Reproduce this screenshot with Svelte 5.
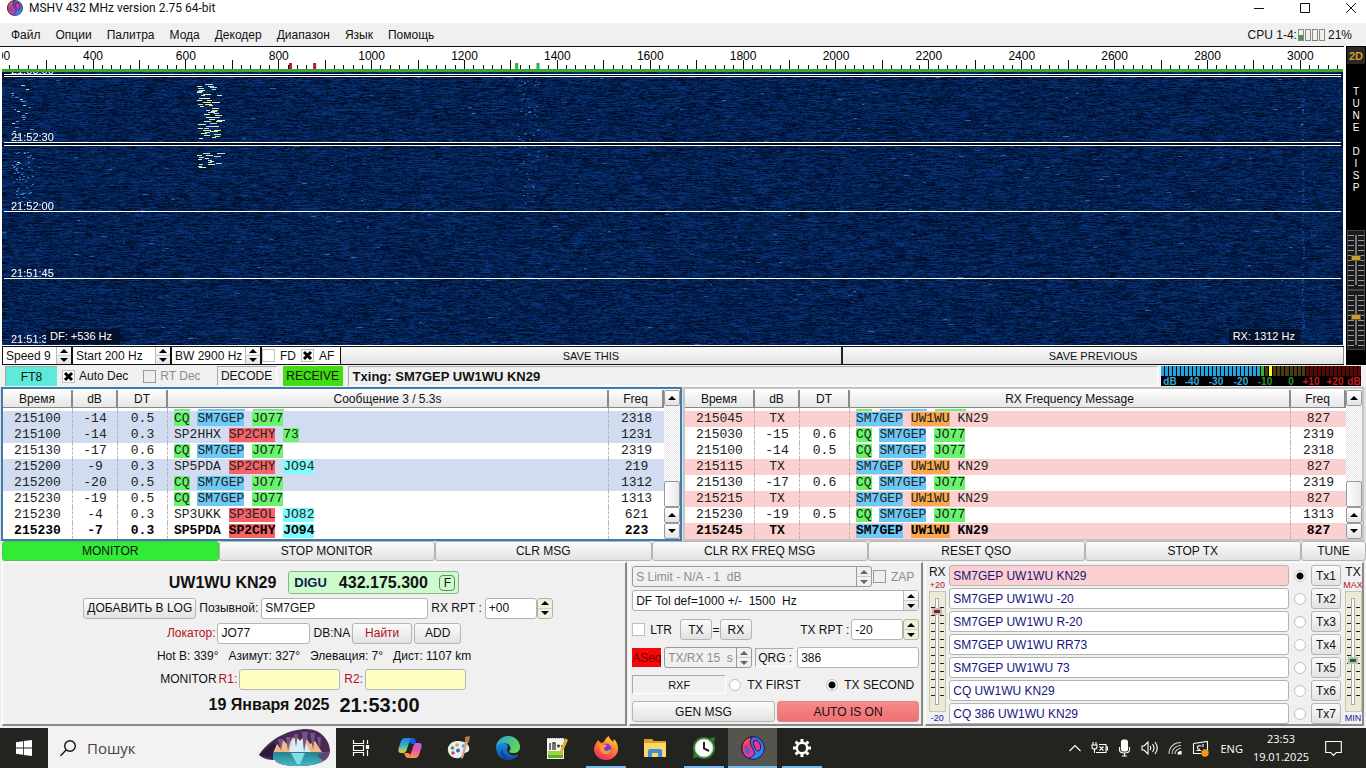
<script>
  import { onMount } from 'svelte';

  const menu = ['Файл', 'Опции', 'Палитра', 'Мода', 'Декодер', 'Диапазон', 'Язык', 'Помощь'];

  // Frequency scale: first visible frequency and visible span in Hz
  const f0 = 204;
  const span = 2890;
  const pct = (f) => ((f - f0) / span) * 100 + '%';
  const ticks = [];
  for (let f = 220; f < f0 + span; f += 20) ticks.push(f);
  const labels = [];
  for (let f = 200; f <= 3000; f += 200) labels.push(f);

  const fallHeight = 273;
  const stamps = [
    { t: '21:53:00', y: -9 },
    { t: '21:52:30', y: 58 },
    { t: '21:52:00', y: 127 },
    { t: '21:51:45', y: 194 },
    { t: '21:51:30', y: 260 }
  ];

  let canvas;
  onMount(() => {
    const W = 1341;
    const H = fallHeight;
    const ctx = canvas.getContext('2d');
    const img = ctx.createImageData(W, H);
    let seed = 77123;
    const rnd = () => {
      seed = (seed * 1664525 + 1013904223) >>> 0;
      return seed / 4294967296;
    };
    for (let y = 0; y < H; y++) {
      let v = rnd();
      for (let x = 0; x < W; x++) {
        v = v * 0.72 + rnd() * 0.28;
        let k = Math.max(0, Math.min(1, (v - 0.5) * 2.4 + 0.45));
        const i = (y * W + x) * 4;
        img.data[i] = k * 8;
        img.data[i + 1] = 14 + k * 40;
        img.data[i + 2] = 44 + k * 80;
        img.data[i + 3] = 255;
      }
    }
    ctx.putImageData(img, 0, 0);
    const streak = (x, y, w, c) => {
      ctx.fillStyle = c;
      ctx.fillRect(Math.round(x), Math.round(y), Math.round(w), 1);
    };
    for (let n = 0; n < 260; n++)
      streak(rnd() * W, rnd() * H, 2 + rnd() * 4, 'rgba(90,140,220,' + (0.25 + rnd() * 0.4) + ')');
    const bursts = [[11, 66], [80, 96]];
    for (const [a, b] of bursts) {
      for (let y = a; y < b; y += 2) {
        for (let n = 0; n < 2; n++) {
          const x = 194 + rnd() * 21;
          streak(x, y + rnd(), 4 + rnd() * 4, rnd() > 0.45 ? '#e4f29a' : '#b9dcec');
        }
        if (rnd() > 0.3) streak(9 + rnd() * 20, y, 2 + rnd() * 2, rnd() > 0.7 ? '#b5d8c8' : '#5f96d2');
      }
    }
    for (let n = 0; n < 50; n++)
      streak(10 + rnd() * 20, 76 + rnd() * 56, 2, '#3f76bc');
    for (let n = 0; n < 60; n++)
      streak(514 + rnd() * 22, 2 + rnd() * 130, 2, 'rgba(80,140,220,.6)');
    for (let n = 0; n < 130; n++) streak(1299 + rnd() * 2, rnd() * H, 2, 'rgba(30,90,190,.5)');
    ctx.fillStyle = '#020a18';
    ctx.fillRect(0, 3, W, 1);
    ctx.fillRect(0, 71, W, 2);
    ctx.fillStyle = '#fff';
    for (const y of [2, 4, 70, 73, 139, 206]) ctx.fillRect(2, y, W - 4, 1);
  });

  const cq = [['CQ', 'g'], ['SM7GEP', 'b'], ['JO77', 'g']];
  const own = [['SM7GEP', 'b'], ['UW1WU', 'o'], ['KN29', '']];
  const left = {
    title: 'Сообщение 3 / 5.3s',
    rows: [
      { c: ['215100', '-14', '0.5', cq, '2318'], k: 'lav' },
      { c: ['215100', '-14', '0.3', [['SP2HHX', ''], ['SP2CHY', 'r'], ['73', 'g']], '1231'], k: 'lav' },
      { c: ['215130', '-17', '0.6', cq, '2319'], k: '' },
      { c: ['215200', '-9', '0.3', [['SP5PDA', ''], ['SP2CHY', 'r'], ['JO94', 'c']], '219'], k: 'lav' },
      { c: ['215200', '-20', '0.5', cq, '1312'], k: 'lav' },
      { c: ['215230', '-19', '0.5', cq, '1313'], k: '' },
      { c: ['215230', '-4', '0.3', [['SP3UKK', ''], ['SP3EOL', 'r'], ['JO82', 'c']], '621'], k: '' },
      { c: ['215230', '-7', '0.3', [['SP5PDA', ''], ['SP2CHY', 'r'], ['JO94', 'c']], '223'], k: 'last' }
    ]
  };
  const right = {
    title: 'RX Frequency Message',
    rows: [
      { c: ['215045', 'TX', '', own, '827'], k: 'pink' },
      { c: ['215030', '-15', '0.6', cq, '2319'], k: '' },
      { c: ['215100', '-14', '0.5', cq, '2318'], k: '' },
      { c: ['215115', 'TX', '', own, '827'], k: 'pink' },
      { c: ['215130', '-17', '0.6', cq, '2319'], k: '' },
      { c: ['215215', 'TX', '', own, '827'], k: 'pink' },
      { c: ['215230', '-19', '0.5', cq, '1313'], k: '' },
      { c: ['215245', 'TX', '', own, '827'], k: 'pink last' }
    ]
  };

  const actions = ['MONITOR', 'STOP MONITOR', 'CLR MSG', 'CLR RX FREQ MSG', 'RESET QSO', 'STOP TX', 'TUNE'];
  const tx = [
    'SM7GEP UW1WU KN29', 'SM7GEP UW1WU -20', 'SM7GEP UW1WU R-20', 'SM7GEP UW1WU RR73',
    'SM7GEP UW1WU 73', 'CQ UW1WU KN29', 'CQ 386 UW1WU KN29'
  ];

  const bars = Array.from({ length: 50 }, (_, i) =>
    i < 25 ? '#23a4dc' : i === 25 ? '#2fb52f' : i === 27 ? '#ffff30' : i < 36 ? '#4a3c10' : '#5c0808'
  );
  const db = [
    ['dB', 9, '#33aadd'], ['-40', 31, '#33aadd'], ['-30', 55, '#33aadd'], ['-20', 80, '#33aadd'],
    ['-10', 104, '#1f9a2a'], ['0', 130, '#1f9a2a'], ['+10', 150, '#d01818'], ['+20', 174, '#d01818'], ['dB', 193, '#d01818']
  ];
</script>

{#snippet arrows(label)}
  <span class="arrows">
    <button type="button" aria-label="{label} up"><svg viewBox="0 0 8 4"><path d="M0 4 4 0 8 4z" /></svg></button>
    <button type="button" aria-label="{label} down"><svg viewBox="0 0 8 4"><path d="M0 0h8L4 4z" /></svg></button>
  </span>
{/snippet}

{#snippet spin(value, label, cls, off = false)}
  <span class="spin {cls}" class:off>
    <input type="text" {value} aria-label={label} disabled={off} />
    {@render arrows(label)}
  </span>
{/snippet}

{#snippet logo(size, id)}
  <svg width={size} height={size} viewBox="0 0 24 24">
    <defs>
      <linearGradient id="{id}a" x1="0" y1="0" x2="0.4" y2="1"><stop offset="0" stop-color="#ff8040" /><stop offset=".45" stop-color="#f83c50" /><stop offset="1" stop-color="#e03aa8" /></linearGradient>
      <linearGradient id="{id}b" x1="0" y1="0" x2=".6" y2="1"><stop offset="0" stop-color="#6a44d8" /><stop offset="1" stop-color="#2a8cf0" /></linearGradient>
    </defs>
    <circle cx="12" cy="12" r="11.400" fill="url(#{id}b)" stroke="#20184a" stroke-width="1" />
    <path d="M11 1C4 2 1 7 1 12s3 9 6.500 10.200C12 21 15 18 12.500 14 10 10 7.500 5 11 1z" fill="url(#{id}a)" stroke="#20184a" />
    <path d="M13 5c3-1.500 6 1 6.500 5s-2 6-3.500 4.500-5-7-3-9.500z" fill="#e03c8c" stroke="#20184a" />
    <path d="M4.500 9c2-.5 5.500 4 5 7s-3.500 2.500-5 0-2-6.500 0-7z" fill="#4a58e0" opacity=".75" />
  </svg>
{/snippet}

{#snippet log(data, cls)}
  <section class="log {cls}">
    <table>
      <colgroup><col class="c1" /><col class="c2" /><col class="c3" /><col /><col class="c5" /></colgroup>
      <thead>
        <tr><th>Время</th><th>dB</th><th>DT</th><th>{data.title}</th><th>Freq</th></tr>
      </thead>
      <tbody>
        <tr class="peek"><td></td><td></td><td></td><td class="msg"><i class="g w2"></i><i class="b w6"></i><i class="g w4"></i></td><td></td></tr>
        {#each data.rows as row}
          <tr class={row.k}>
            {#each row.c as cell, i}
              {#if i === 3}
                <td class="msg">{#each cell as [word, tone], n}{n ? ' ' : ''}<span class={tone}>{word}</span>{/each}</td>
              {:else}
                <td>{cell}</td>
              {/if}
            {/each}
          </tr>
        {/each}
      </tbody>
    </table>
    <div class="scroll">
      <button type="button" aria-label="Scroll to top"><svg viewBox="0 0 8 4"><path d="M0 4 4 0 8 4z" /></svg></button>
      <div class="track"><div class="thumb"></div></div>
      <button type="button" aria-label="Scroll up"><svg viewBox="0 0 8 4"><path d="M0 4 4 0 8 4z" /></svg></button>
      <button type="button" aria-label="Scroll down"><svg viewBox="0 0 8 4"><path d="M0 0h8L4 4z" /></svg></button>
    </div>
  </section>
{/snippet}

<div class="screen">
  <header class="title">
    {@render logo(16, 't')}
    <span>MSHV 432 MHz version 2.75 64-bit</span>
    <div class="wins">
      <button type="button" aria-label="Minimize"><svg viewBox="0 0 12 12"><path d="M1 6.500h10" /></svg></button>
      <button type="button" aria-label="Maximize"><svg viewBox="0 0 12 12"><path d="M1.500 1.500h9v9h-9z" /></svg></button>
      <button type="button" aria-label="Close"><svg viewBox="0 0 12 12"><path d="M1 1l10 10M11 1 1 11" /></svg></button>
    </div>
  </header>

  <nav class="menu">
    {#each menu as m}<button type="button">{m}</button>{/each}
    <div class="cpu">CPU 1-4:<i><b></b></i><i></i><i class="low"></i><i></i><span>21%</span></div>
  </nav>

  <div class="top">
    <div class="topmain">
      <svg class="ruler" role="img" aria-label="Frequency scale">
        {#each ticks as f}
          <line x1={pct(f)} x2={pct(f)} y1={f % 100 === 0 ? 13 : 18} y2="22" stroke="#111" shape-rendering="crispEdges" />
        {/each}
        {#each labels as f}
          <text x={pct(f)} y="13" text-anchor="middle">{f}</text>
        {/each}
        {#each [822, 874] as f}<rect x={pct(f)} y="16" width="3" height="6" fill="#b81c2c" />{/each}
        {#each [1309, 1355] as f}<rect x={pct(f)} y="16" width="3" height="6" fill="#22b83c" />{/each}
      </svg>
      <div class="fall">
        <canvas bind:this={canvas} width="1341" height={fallHeight}></canvas>
        {#each stamps as s}
          <span class="stamp" style:top="{(s.y / fallHeight) * 100}%">{s.t}</span>
        {/each}
        <span class="df">DF: +536 Hz</span>
        <span class="rxhz">RX: 1312 Hz</span>
      </div>
      <div class="ctl">
        {@render spin('Speed 9', 'Speed', 's1')}
        {@render spin('Start 200 Hz', 'Start', 's2')}
        {@render spin('BW 2900 Hz', 'Bandwidth', 's3')}
        <span class="flags">
          <label><input type="checkbox" />FD</label>
          <label><input type="checkbox" checked />AF</label>
        </span>
        <button type="button" class="save">SAVE THIS</button>
        <button type="button" class="save">SAVE PREVIOUS</button>
      </div>
    </div>
    <aside class="side">
      <button type="button">2D</button>
      <div class="word"><span>T</span><span>U</span><span>N</span><span>E</span><span></span><span>D</span><span>I</span><span>S</span><span>P</span></div>
      <input class="dark" type="range" value="54" aria-label="Contrast" />
      <input class="dark" type="range" value="56" aria-label="Brightness" />
    </aside>
  </div>

  <div class="status">
    <button type="button" class="ft8">FT8</button>
    <label class="auto"><input type="checkbox" checked />Auto Dec</label>
    <label class="rt"><input type="checkbox" disabled />RT Dec</label>
    <button type="button" class="sunk">DECODE</button>
    <span class="recv">RECEIVE</span>
    <span class="txing">Txing: SM7GEP UW1WU KN29</span>
    <div class="meter">
      <div class="bars">{#each bars as b}<i style:background={b}></i>{/each}</div>
      <svg viewBox="0 0 200 10">
        {#each db as [t, x, c]}<text {x} y="9" fill={c} text-anchor="middle">{t}</text>{/each}
      </svg>
    </div>
  </div>

  <div class="logs">
    {@render log(left, 'focus')}
    {@render log(right, '')}
  </div>

  <div class="actions">
    {#each actions as a, i}<button type="button" class:on={i === 0}>{a}</button>{/each}
  </div>

  <main class="panels">
    <section class="panel station">
      <div class="line big">
        <strong>UW1WU KN29</strong>
        <div class="freq"><span>DIGU</span><strong>432.175.300</strong><button type="button">F</button></div>
      </div>
      <div class="line callrow">
        <button type="button" class="btn add-log">ДОБАВИТЬ В LOG</button>
        <label for="call">Позывной:</label>
        <input id="call" class="field call" value="SM7GEP" />
        <label for="rpt">RX RPT :</label>
        <span class="joined"><input id="rpt" class="field rpt" value="+00" />{@render arrows('RX report')}</span>
      </div>
      <div class="line">
        <label for="loc" class="red">Локатор:</label>
        <input id="loc" class="field loc" value="JO77" />
        <span>DB:NA</span>
        <button type="button" class="btn find red">Найти</button>
        <button type="button" class="btn add">ADD</button>
      </div>
      <div class="line info"><span>Hot B: 339°</span><span>Азимут: 327°</span><span>Элевация: 7°</span><span>Дист: 1107 km</span></div>
      <div class="line">
        <span>MONITOR</span>
        <label for="r1" class="red">R1:</label>
        <input id="r1" class="field mon" />
        <label for="r2" class="red">R2:</label>
        <input id="r2" class="field mon" />
      </div>
      <div class="line clockline"><strong>19 Января 2025</strong><strong class="now">21:53:00</strong></div>
    </section>

    <section class="panel control">
      <div class="line first">
        {@render spin('S Limit - N/A - 1  dB', 'S Limit', 'grow round', true)}
        <label class="off"><input type="checkbox" disabled />ZAP</label>
      </div>
      <div class="line">{@render spin('DF Tol def=1000 +/-  1500  Hz', 'DF tolerance', 'grow round')}</div>
      <div class="line ltr">
        <label><input type="checkbox" />LTR</label>
        <span class="swap"><button type="button" class="btn">TX</button><b>=</b><button type="button" class="btn">RX</button></span>
        <label class="push" for="txrpt">TX RPT :</label>
        <span class="joined"><input id="txrpt" class="field rpt" value="-20" />{@render arrows('TX report')}</span>
      </div>
      <div class="line seq">
        <button type="button" class="aseq">ASeq</button>
        {@render spin('TX/RX 15  s', 'Period', 'period round', true)}
        <label class="sunk qrg" for="qrg">QRG :</label>
        <input id="qrg" class="field fill" value="386" />
      </div>
      <div class="line order">
        <span class="sunk rxf">RXF</span>
        <label><input type="radio" name="order" />TX FIRST</label>
        <label class="second"><input type="radio" name="order" checked />TX SECOND</label>
      </div>
      <div class="line two">
        <button type="button" class="btn">GEN MSG</button>
        <button type="button" class="btn autoon">AUTO IS ON</button>
      </div>
    </section>

    <section class="panel messages">
      <div class="level"><span>RX</span><small class="red">+20</small><input class="light rxs" type="range" value="86" aria-label="RX level" /><small class="blue">-20</small></div>
      <div class="list">
        {#each tx as t, i}
          <div class="txrow">
            <input class="field" class:hot={i === 0} value={t} aria-label="Message {i + 1}" />
            <input type="radio" name="tx" checked={i === 0} aria-label="Select message {i + 1}" />
            <button type="button" class="btn">Tx{i + 1}</button>
          </div>
        {/each}
      </div>
      <div class="level"><span>TX</span><small class="red">MAX</small><input class="light txs" type="range" value="42" aria-label="TX level" /><small class="blue">MIN</small></div>
    </section>
  </main>

  <footer class="taskbar">
    <button type="button" class="task" aria-label="Start"><svg width="16" height="16" viewBox="0 0 16 16"><path fill="#fff" d="M0 2.200 7 1.200v6.400H0zM7.800 1.100 16 0v7.600H7.800zM0 8.400h7v6.400L0 13.800zM7.800 8.400H16V16l-8.200-1.100z" /></svg></button>
    <label class="search">
      <svg width="18" height="18" viewBox="0 0 18 18" fill="none" stroke="#111" stroke-width="1.400"><circle cx="11" cy="7" r="5.300" /><path d="M7.200 11 1.500 16.700" /></svg>
      <input placeholder="Пошук" aria-label="Пошук" />
      <svg width="72" height="38" viewBox="0 0 72 38">
        <defs>
          <clipPath id="cave"><path d="M0 26C10 10 30 0 48 0c14 0 23 12 23 22-1 11-14 15-32 15-12 0-21-2-23-6-6 0-12-1-16-5z" /></clipPath>
          <linearGradient id="sea" x1="0" y1="0" x2="0" y2="1"><stop offset="0" stop-color="#27808c" /><stop offset="1" stop-color="#45bccb" /></linearGradient>
        </defs>
        <g clip-path="url(#cave)">
          <path fill="#4a2a55" d="M0 0h72v38H0z" />
          <path fill="#2c1a38" d="M0 26 14 14l4 3-4 12z" />
          <path fill="#f0b98c" d="M14 24 18 15l3 4 3-8 5 5 5-8 5 5 7-6 5 8 5-3 5 8 4 6H14z" />
          <path fill="#d6eef4" d="M30 24l3-12 4-5 4 5 5-3 2 8 4 7z" />
          <path fill="#73548d" d="M19 10h5l-2 12zM27 8h5l-3 14zM35 5h4l-2 13zM43 3h6l-4 20zM51 4h5l-2 17zM58 8h4l-1 12z" />
          <path fill="url(#sea)" d="M14 23h56v15H14z" />
          <path fill="#83dbe5" d="M32 24h14l-5 11h-3z" />
          <path fill="#6b4070" d="M58 26l12-4v8l-6 2z" />
        </g>
      </svg>
    </label>
    <button type="button" class="task" aria-label="Task view"><svg width="18" height="16" viewBox="0 0 18 16" fill="none" stroke="#fff" stroke-width="1.200"><path d="M1.500 0v3.500h10V0M1.500 16v-3.500h10V16M1.500 5.500h10v5h-10zM15.500 0v4M15.500 10v6" /><path d="M14.500 5.500h2v3h-2z" fill="#fff" /></svg></button>
    <button type="button" class="task" aria-label="Copilot">
      <svg width="24" height="22" viewBox="0 0 24 22">
        <defs>
          <linearGradient id="cp1" x1="0" y1="0" x2="0" y2="1"><stop offset="0" stop-color="#1f7fe8" /><stop offset=".45" stop-color="#2bb0c8" /><stop offset="1" stop-color="#e8d038" /></linearGradient>
          <linearGradient id="cp2" x1="0" y1="0" x2="0" y2="1"><stop offset="0" stop-color="#b15cf0" /><stop offset=".5" stop-color="#f0589c" /><stop offset="1" stop-color="#f89850" /></linearGradient>
        </defs>
        <path fill="#1a5cd0" d="M8 1h7q2 0 3 4l1 2h-5q-2 0-3-3z" />
        <path fill="url(#cp1)" d="M7 1h6q-1 1-2 5l-2 6q-1 4-4 4H3q-4 0-2-6l2-6q1-3 4-3z" />
        <path fill="url(#cp2)" d="M17 21h-6q1-1 2-5l2-6q1-4 4-4h2q4 0 2 6l-2 6q-1 3-4 3z" />
        <path fill="#f88a3c" d="M6 16h4q2 0 3 3l-2 2H9q-2-1-3-5z" />
      </svg>
    </button>
    <button type="button" class="task" aria-label="Paint">
      <svg width="24" height="24" viewBox="0 0 24 24">
        <path fill="#e9eef2" d="M11 5C4 5 0 10 1 15s6 8 11 7c4-1 3-4 6-5s5-2 4-6c-1-4-6-6-11-6z" />
        <circle cx="10" cy="9" r="1.800" fill="#e8a02c" /><circle cx="5.500" cy="12" r="1.800" fill="#4a9a50" /><circle cx="6" cy="17" r="1.800" fill="#d04a3a" /><circle cx="11" cy="14.500" r="2" fill="#2a6dc0" /><circle cx="16.500" cy="10" r="1.800" fill="#4aa6e0" />
        <path fill="#d8a878" d="M18 6h3l-5 16-2 1 1-5z" /><path fill="#b07a50" d="M18 1l5-1-1 6h-4z" />
      </svg>
    </button>
    <button type="button" class="task" aria-label="Edge">
      <svg width="26" height="26" viewBox="0 0 26 26">
        <defs>
          <linearGradient id="eg1" x1="0" y1="0" x2="1" y2=".4"><stop offset="0" stop-color="#2a9be0" /><stop offset="1" stop-color="#5cd85c" /></linearGradient>
          <linearGradient id="eg2" x1="0" y1="0" x2="0" y2="1"><stop offset="0" stop-color="#1a8ce0" /><stop offset="1" stop-color="#0d4fa8" /></linearGradient>
        </defs>
        <path fill="url(#eg2)" d="M1 12c0 8 5 13 12 13 5 0 9-3 11-6-5 3-11 1-12-4 0-2 1-3 1-4C11 7 3 6 1 12z" />
        <path fill="url(#eg1)" d="M1 12C2 5 7 1 13 1c8 0 12 6 12 11 0 4-3 6-6 6-4 0-6-1-4-3 2-4-2-7-7-7-3 0-6 2-7 4z" />
        <path fill="#0a3f8c" d="M8 14c0 6 5 10 11 9-4 3-11 2-13-3-1-3 0-5 2-6z" opacity=".7" />
      </svg>
    </button>
    <button type="button" class="task" aria-label="Notepad++">
      <svg width="24" height="24" viewBox="0 0 24 24">
        <path fill="#f4f6ee" d="M2 2h17v21H2z" /><path fill="#9bd645" d="M3 15h15v7H3z" /><path fill="#5fae2a" d="M3 19h15v3H3z" />
        <path stroke="#333" stroke-width="1.300" fill="none" d="M5 14V7M8 14V7h2v7M12 10h3M13.500 8.500v3M16 10h3" /><path stroke="#aaa" stroke-dasharray="1 1" d="M2 2.500h17" />
        <path fill="#e0b23a" d="M20 2l3 2-6 13-3 2 1-4z" />
      </svg>
    </button>
    <button type="button" class="task run" aria-label="Firefox">
      <svg width="24" height="24" viewBox="0 0 24 24">
        <defs><linearGradient id="ff" x1=".8" y1="0" x2=".3" y2="1"><stop offset="0" stop-color="#ffd93a" /><stop offset=".5" stop-color="#ff7a2a" /><stop offset="1" stop-color="#f0286a" /></linearGradient></defs>
        <path fill="url(#ff)" d="M4 4l3 3 3-1c1-3 3-5 5-6 0 3 3 4 4 6l1-3c3 3 4 6 4 10 0 6-5 11-12 11S0 19 0 13c0-3 2-6 4-9z" />
        <circle cx="12" cy="13" r="5.500" fill="#7a3ad8" /><path fill="#ff9a2c" d="M5 9c3-2 5 0 8 0-1 2-3 2-3 4 1 3 5 2 7 0 0 4-3 6-6 5-4 0-6-5-6-9z" />
      </svg>
    </button>
    <button type="button" class="task" aria-label="Explorer">
      <svg width="22" height="20" viewBox="0 0 22 20"><path fill="#d9a02c" d="M0 1h8l2 2h12v5H0z" /><path fill="#fbd66c" d="M0 5h22v14H0z" /><path fill="#3d8fd0" d="M4 19v-6q0-2 2-2h10q2 0 2 2v6h-4v-4H8v4z" /></svg>
    </button>
    <button type="button" class="task run" aria-label="Time sync">
      <svg width="24" height="24" viewBox="0 0 24 24"><circle cx="12" cy="12" r="11" fill="#2f7a2c" /><circle cx="12" cy="12" r="9" fill="#fff" stroke="#a8dba0" /><path d="M12 6v6.500l5 2.500" fill="none" stroke="#222" stroke-width="2" /><path fill="#2f7a2c" d="M18 2l5-1-1 6zM1 22l1-6 5 5z" /></svg>
    </button>
    <button type="button" class="task run active" aria-label="MSHV">{@render logo(24, 'k')}</button>
    <button type="button" class="task run" aria-label="Settings">
      <svg width="20" height="20" viewBox="0 0 20 20" fill="none" stroke="#fff"><circle cx="10" cy="10" r="5.200" stroke-width="2.400" /><path stroke-width="3" d="M10 1v3M10 16v3M1 10h3M16 10h3M3.600 3.600l2.200 2.200M14.200 14.200l2.200 2.200M16.400 3.600l-2.200 2.200M5.800 14.200l-2.200 2.200" /></svg>
    </button>

    <div class="tray">
      <svg width="12" height="8" viewBox="0 0 12 8"><path d="M.5 7 6 1.500 11.500 7" /></svg>
      <svg width="17" height="14" viewBox="0 0 17 14"><path d="M2 1v3M5 1v3M1 4h5v2q0 2-2.500 2T1 6zM3.500 8v4M8 3.500h7v8H5M15.500 6h1v3h-1M8.500 5.500l4 4M12.500 5.500l-4 4" /></svg>
      <svg width="13" height="18" viewBox="0 0 13 18"><rect x="3.500" y="1" width="6" height="11" rx="2" fill="#fff" /><path d="M1.500 8v3q0 3 5 3t5-3V8M6.500 14v3M4 17h5" /></svg>
      <svg width="17" height="14" viewBox="0 0 17 14"><path d="M1 5h2l4-4v12L3 9H1zM9 5q1.500 2 0 4M11.500 3q3 4 0 8M14 1q4.500 6 0 12" /></svg>
      <svg width="14" height="14" viewBox="0 0 14 14"><path d="M1 13C1 6 6 1.500 13 1.500M4 13c0-5 4-8.500 9-8.500M7 13c0-3 2.500-5.500 6-5.500" opacity=".8" /><path d="M10 13q0-2.500 3-2.500V13z" fill="#fff" /></svg>
      <svg width="18" height="17" viewBox="0 0 18 17"><path d="M1.500 3.500 15.500 1.500v9M1.500 3.500v10H9M4.500 10.500H9M9.500 6q-4-1-4 1.500T8 9M11 4v3" /><circle cx="13" cy="13" r="3.700" fill="#f09a1c" stroke="none" /></svg>
      <span>ENG</span>
      <time><span>23:53</span><span>19.01.2025</span></time>
      <svg width="17" height="17" viewBox="0 0 17 17"><path d="M.7 1.500h15.600v11h-5L8.500 15.500 5.700 12.500h-5z" /></svg>
    </div>
  </footer>
</div>

<style>
  :global(body) { margin: 0; background: #f0f0f0; }
  .screen {
    display: flex; flex-direction: column; min-height: 100vh; overflow: hidden;
    font-family: "Liberation Sans", Arial, sans-serif; font-size: 12px; color: #111; background: #f0f0f0;
  }
  .screen *, .screen *::before { box-sizing: border-box; }
  button, input { font: inherit; color: inherit; margin: 0; padding: 0; }
  button { border: 0; background: none; white-space: nowrap; }
  input { min-width: 0; }
  svg { display: block; flex: none; }
  .red { color: #b01020; }
  .blue { color: #1018a0; }

  .title { display: flex; align-items: center; gap: 6px; height: 23px; padding: 0 8px 8px 7px; background: #fff; font: 12px Roboto, "Noto Sans", sans-serif; }
  .wins { margin-left: auto; display: flex; gap: 34px; padding-right: 1px; }
  .wins svg { width: 12px; height: 12px; fill: none; stroke: #111; }

  .menu { display: flex; align-items: center; gap: 15px; height: 23px; padding: 0 14px 0 11px; }
  .cpu { margin-left: auto; display: flex; align-items: center; gap: 1px; }
  .cpu i { width: 6px; height: 12px; border: 1px solid #8a8a80; display: flex; align-items: flex-end; }
  .cpu b { flex: 1; height: 5px; background: #3f9a4c; }
  .cpu .low { border-bottom-color: #3f9a4c; }
  .cpu span { padding-left: 2px; }

  .top { display: flex; flex: 1 0 auto; }
  .topmain { flex: 1; min-width: 0; display: flex; flex-direction: column; padding-left: 2px; border-top: 1px solid #111; background: #fff; }
  .ruler { width: 100%; height: 22px; background: #fff; overflow: hidden; font-size: 12px; }
  .fall { position: relative; flex: 1 0 277px; border-top: 3px solid #35a83c; border-bottom: 1px solid #fff; margin-right: 1px; background: #03204e; overflow: hidden; }
  .fall canvas { position: absolute; inset: 0; width: 100%; height: 100%; display: block; }
  .stamp { position: absolute; left: 9px; color: #fff; line-height: 14px; font-size: 11px; }
  .df, .rxhz { position: absolute; bottom: 1px; height: 15px; line-height: 15px; padding: 0 4px; font-size: 11px; color: #fff; background: #03112d; }
  .df { left: 44px; width: 74px; }
  .rxhz { right: 43px; padding-right: 5px; }

  .ctl { display: flex; height: 19px; border: 1px solid #111; border-width: 1px 0 1px 1px; background: #fff; }
  .spin { display: flex; align-items: stretch; background: #fff; }
  .spin input { flex: 1; border: 0; background: none; padding: 0 0 0 3px; white-space: pre; }
  .arrows { display: flex; flex-direction: column; flex: none; width: 15px; background: linear-gradient(#fff, #e4e4e4); border-left: 1px solid #bbb; }
  .arrows button { flex: 1; display: flex; align-items: center; justify-content: center; }
  .arrows button + button { border-top: 1px solid #ccc; }
  .arrows svg, .scroll svg { width: 8px; height: 4px; }
  .ctl .spin { border-right: 2px solid #111; }
  .s1 { width: 70px; }
  .s2 { width: 99px; }
  .s3 { width: 90px; }
  .flags { display: flex; gap: 5px; width: 79px; border-right: 1px solid #111; }
  label { display: flex; align-items: center; white-space: nowrap; }
  .flags label { gap: 5px; }
  input[type="checkbox"] { appearance: none; width: 13px; height: 13px; border: 1px solid #c0c0c0; background: #fff; flex: none; }
  input[type="checkbox"]:checked { background: #fff url("data:image/svg+xml,%3Csvg xmlns='http://www.w3.org/2000/svg' viewBox='0 0 11 11'%3E%3Cpath d='M2 2l7 7M9 2L2 9' stroke='%23000' stroke-width='3'/%3E%3C/svg%3E"); }
  input[type="checkbox"]:disabled { background: #eee; border-color: #999; }
  .save { flex: 1; background: linear-gradient(#fafafa, #e2e2e2); border-right: 2px solid #222; font-size: 11px; }
  .save:last-child { border-right: 1px solid #888; }

  .side { width: 22px; background: #000; display: flex; flex-direction: column; align-items: center; border-left: 2px solid #fff; padding: 1px 1px 15px; }
  .side > button { width: 18px; height: 17px; background: #2c2826; color: #c8a030; font-weight: bold; font-size: 11px; }
  .word { display: flex; flex-direction: column; color: #fff; font-size: 10px; line-height: 12px; text-align: center; margin: 22px 0 auto; }
  .word span { height: 12px; }

  input[type="range"] { appearance: none; writing-mode: vertical-lr; direction: rtl; flex: none; }
  .dark { width: 18px; height: 60px; border: 1px solid #444; background: linear-gradient(#777, #777) 50% 50% / 2px 50px no-repeat, linear-gradient(90deg, transparent 6px, #1a1a1a 6px 10px, transparent 10px), repeating-linear-gradient(#1a1a1a 0 4px, #999 4px 5px); }
  .dark::-webkit-slider-thumb { appearance: none; width: 10px; height: 6px; background: #c8a030; border: 1px solid #6a5520; }
  .light { width: 17px; height: 121px; border: 1px solid #c8c4b0; background: linear-gradient(#fff, #fff) 50% 50% / 2px 105px no-repeat, linear-gradient(#aaa, #aaa) 50% 50% / 4px 107px no-repeat, linear-gradient(90deg, #ece9d4 1px, transparent 1px 5px, #ece9d4 5px 10px, transparent 10px 14px, #ece9d4 14px), linear-gradient(#ece9d4, #ece9d4) 0 0 / 100% 8px no-repeat, linear-gradient(#ece9d4, #ece9d4) 0 100% / 100% 8px no-repeat, repeating-linear-gradient(#ece9d4 0 7px, #222 7px 8px); }
  .light::-webkit-slider-thumb { appearance: none; width: 10px; height: 7px; border: 2px solid #bbb; }
  .rxs::-webkit-slider-thumb { background: #a01020; }
  .txs::-webkit-slider-thumb { background: #106a20; }

  .status { display: flex; align-items: stretch; height: 22px; padding: 1px 5px 1px; }
  .ft8 { width: 52px; background: #5eeadb; border: 1px solid #9aa; border-width: 1px 0 0 1px; }
  .auto, .rt { gap: 4px; padding-left: 5px; }
  .rt { padding-left: 15px; color: #8c8c8c; }
  .sunk { border: 1px solid #aaa; border-color: #aaa #fff #fff #aaa; }
  .status .sunk { margin-left: 16px; width: 60px; }
  .recv { margin-left: 6px; width: 60px; background: #3ede12; display: flex; align-items: center; justify-content: center; }
  .txing { flex: 1; margin: 0 3px 0 5px; padding-left: 4px; border: 1px solid #aaa; border-color: #aaa #fff #fff #aaa; font-weight: bold; font-size: 13px; display: flex; align-items: center; }
  .meter { width: 200px; background: #000; }
  .bars { display: flex; height: 10px; gap: 1px; }
  .bars i { flex: 1; }
  .meter svg { width: 200px; height: 10px; font-size: 10px; font-weight: bold; }

  .logs { display: grid; grid-template-columns: 1fr 1fr; gap: 1px; padding: 0 2px 0 1px; background: #e0e0e0; }
  .log { display: flex; border: 2px solid #c4c4c4; background: #fff; min-width: 0; padding: 1px 0 0; }
  .focus { border-color: #3f7cab; }
  table { flex: 1; min-width: 0; table-layout: fixed; border-collapse: separate; border-spacing: 0; font-family: "Liberation Mono", "Courier New", monospace; font-size: 13px; width: 100%; }
  .c1 { width: 70px; }
  .c2 { width: 45px; }
  .c3 { width: 50px; }
  .c5 { width: 55px; }
  th { height: 18px; padding: 0; font: 12px "Liberation Sans", Arial, sans-serif; background: linear-gradient(#fdfdfd, #e6e6e6); border-right: 2px solid #8a8a8a; border-bottom: 1px solid #8a8a8a; }
  td { height: 16px; padding: 0; line-height: 14px; text-align: center; border-right: 1px dashed #b8b8b8; white-space: nowrap; color: #222; overflow: hidden; }
  td:last-child { border-right: 0; }
  .msg { text-align: left; padding-left: 6px; }
  td span { display: inline-block; height: 14px; }
  .peek td { height: 3px; line-height: 0; }
  .peek i { display: inline-block; height: 2px; margin-right: 8px; vertical-align: top; }
  .w2 { width: 16px; }
  .w4 { width: 31px; }
  .w6 { width: 47px; }
  .g { background: #68f46c; }
  .b { background: #6cc8f4; }
  .r { background: #f46468; }
  .o { background: #f8a850; }
  .c { background: #80fcfc; }
  .lav td { background: #d2dcf0; }
  .pink td { background: #fcd0d0; }
  .last td { font-weight: bold; color: #000; }
  .scroll { width: 16px; display: flex; flex-direction: column; flex: none; }
  .scroll button { height: 16px; border: 1px solid #999; border-radius: 2px; background: linear-gradient(#fff, #e4e4e4); display: flex; align-items: center; justify-content: center; }
  .track { flex: 1; background: repeating-conic-gradient(#e4e4e4 0 25%, #fff 0 50%) 0 0 / 2px 2px; display: flex; align-items: flex-end; }
  .thumb { width: 100%; height: 26px; border: 1px solid #999; background: linear-gradient(90deg, #fff, #e8e8e8); border-radius: 2px; }

  .actions { display: grid; grid-template-columns: repeat(6, 1fr) 65px; padding: 0 0 0 2px; height: 20px; }
  .actions button, .btn { background: linear-gradient(#fbfbfb, #e2e2e2); border: 1px solid #b4b4b4; border-radius: 3px; }
  .actions .on { background: #30ec34; border-color: #48c848; }

  .panels { display: grid; grid-template-columns: 627fr 295fr 440fr; gap: 2px; padding: 1px 2px 1px; }
  .panel { border: 1px solid #fff; border-right: 2px solid #8a8a8a; border-bottom: 2px solid #8a8a8a; min-width: 0; height: 164px; }
  .field { height: 21px; padding: 0 3px; border: 1px solid #b4b4b4; border-radius: 3px; background: #fff; }
  .btn { height: 21px; }
  .line { display: flex; align-items: center; justify-content: center; }

  .station { display: flex; flex-direction: column; gap: 3px; padding-top: 8px; }
  .station .line { gap: 2px; height: 22px; }
  .station .big { gap: 12px; height: 23px; font-size: 16px; }
  .station .callrow { gap: 3px; padding-left: 8px; }
  .freq { display: flex; align-items: center; height: 23px; width: 171px; padding: 0 3px 0 5px; border: 1px solid #8cb48c; border-radius: 3px; background: #ccfccc; }
  .freq span { font-size: 13px; font-weight: bold; color: #101c50; }
  .freq strong { margin-left: 12px; }
  .freq button { width: 16px; height: 16px; margin-left: auto; border: 1px solid #777; border-radius: 4px; font-size: 12px; }
  .add-log { width: 113px; }
  .call { width: 167px; }
  .rpt { width: 52px; }
  .joined { display: flex; align-items: center; }
  .joined .arrows { height: 21px; width: 16px; border: 1px solid #b4b49c; background: #f0eedc; border-radius: 3px; }
  .loc { width: 93px; margin-right: 1px; }
  .find { width: 60px; }
  .add { width: 47px; }
  .station .info { gap: 10px; height: 18px; }
  .mon { width: 101px; background: #ffffc4; margin-right: 2px; }
  .station .clockline { gap: 10px; height: 24px; font-size: 16px; }
  .now { font-size: 20px; }

  .control { display: flex; flex-direction: column; padding: 3px 2px 0; }
  .grow { flex: 1; min-width: 0; }
  .round { height: 21px; border: 1px solid #b0b0b0; border-radius: 3px; }
  .off { color: #8c8c8c; background-color: #f0f0f0; border-color: #999; }
  .off .arrows { background: none; fill: #666; border-color: #999; }
  .first { gap: 1px; margin-bottom: 3px; }
  .first label { gap: 5px; padding-right: 5px; }
  .ltr { margin-top: 8px; justify-content: flex-start; }
  .ltr label { gap: 5px; }
  .swap { display: flex; align-items: center; margin-left: 8px; }
  .swap .btn { width: 32px; }
  .swap b { width: 8px; text-align: center; font-weight: normal; }
  .ltr .push { margin-left: auto; padding-right: 2px; }
  .seq { margin-top: 7px; gap: 3px; }
  .aseq { width: 29px; height: 19px; background: #f40808; color: #700; }
  .period { width: 88px; }
  .qrg { height: 19px; width: 39px; padding-left: 2px; }
  .fill { flex: 1; }
  .order { margin-top: 7px; justify-content: flex-start; }
  .rxf { width: 94px; height: 19px; font-size: 11px; display: flex; align-items: center; justify-content: center; }
  .order label { gap: 6px; padding-left: 3px; }
  .order .second { margin-left: auto; padding-right: 5px; }
  input[type="radio"] { appearance: none; width: 12px; height: 12px; border: 1px solid #c0c0c0; border-radius: 50%; background: #fff; flex: none; }
  input[type="radio"]:checked { background: radial-gradient(circle, #000 0 3px, #fff 4px); }
  .two { margin-top: 7px; gap: 2px; }
  .two .btn { flex: 1; }
  .two .autoon { background: linear-gradient(#f88a8a, #f07070); border-color: #d88; }

  .messages { display: flex; padding: 2px 0 0 2px; gap: 3px; }
  .level { display: flex; flex-direction: column; align-items: center; width: 18px; flex: none; }
  .level > span { line-height: 14px; }
  .level small { font-size: 9px; line-height: 12px; }
  .list { flex: 1; min-width: 0; display: flex; flex-direction: column; gap: 2px; }
  .txrow { display: flex; align-items: center; gap: 5px; color: #14147c; }
  .txrow .field { flex: 1; }
  .txrow .hot { background: #fcd0d0; }
  .txrow .btn { width: 30px; color: #111; }

  .taskbar { display: flex; height: 40px; margin-top: 1px; background: #23241f; color: #fff; }
  .task { width: 49px; display: flex; align-items: center; justify-content: center; }
  .task:first-child { width: 48px; }
  .run { background: linear-gradient(#76b9ed, #76b9ed) 50% 100% / 40px 2px no-repeat; }
  .active { background-color: #55554f; background-size: 49px 2px; }
  .search { width: 288px; background: #f2f2f2; color: #222; padding: 0 5px 0 11px; gap: 10px; }
  .search input { flex: 1; border: 0; background: none; font: 15px "Open Sans", "Noto Sans", sans-serif; }
  .search input::placeholder { color: #444; opacity: 1; }
  .tray { margin-left: auto; display: flex; align-items: center; gap: 10px; padding-right: 24px; font: 11px "Open Sans", "Noto Sans", sans-serif; }
  .tray svg { fill: none; stroke: #fff; stroke-width: 1.1; }
  .tray time { display: flex; flex-direction: column; align-items: center; line-height: 18px; margin-right: 6px; }
</style>
